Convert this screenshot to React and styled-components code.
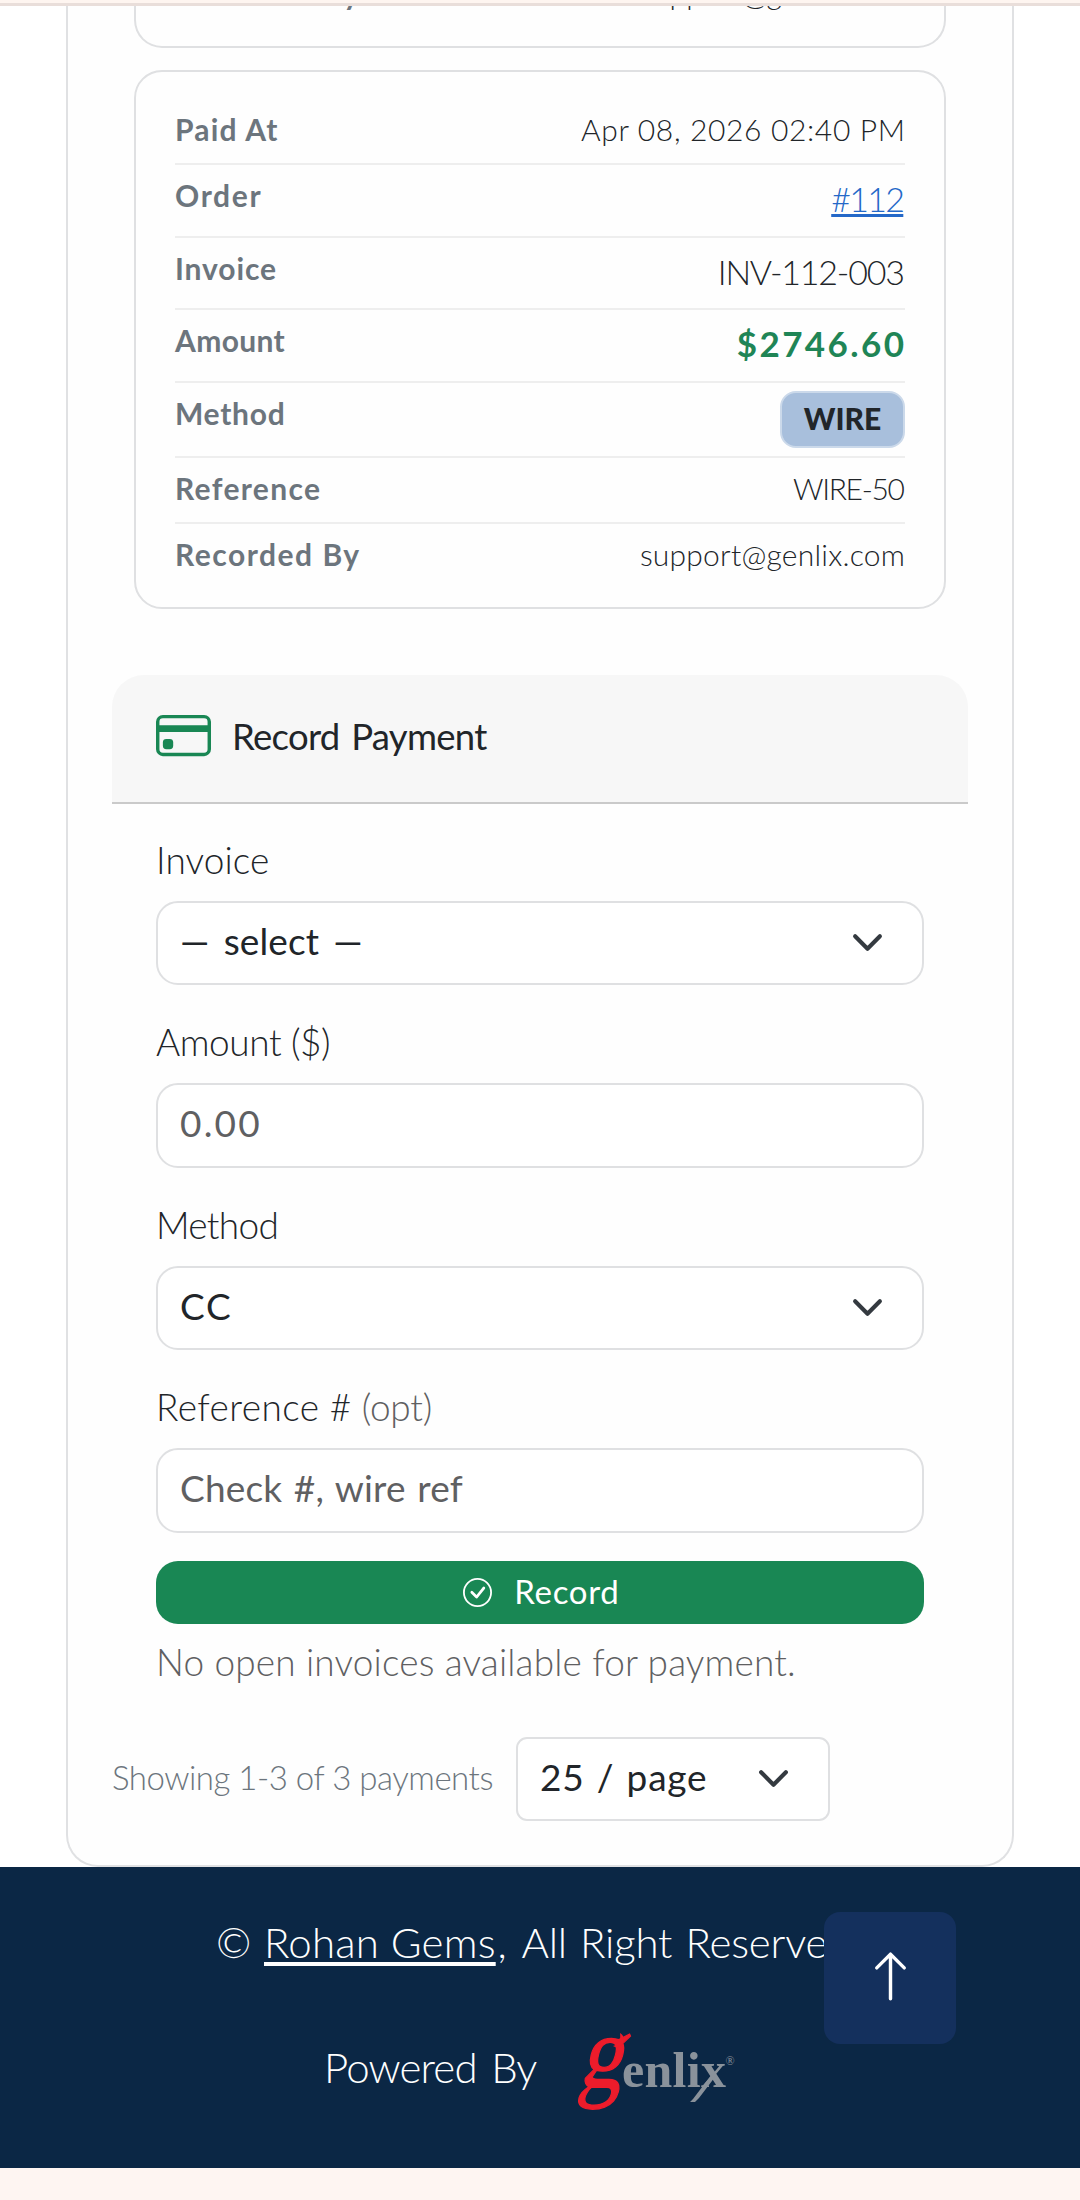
import React from 'react';
import styled, { createGlobalStyle } from 'styled-components';
import { BsArrowUp, BsCheckCircle, BsCreditCard } from 'react-icons/bs';

const GlobalStyle = createGlobalStyle`
  * {
    box-sizing: border-box;
  }
  body {
    margin: 0;
    background: #fef5f2;
    color: #212529;
    font-family: Lato, sans-serif;
    font-weight: 300;
    overflow: hidden;
  }
`;

const Page = styled.div`
  position: relative;
  width: 1080px;
  height: 2200px;
  overflow: hidden;
`;
const TopBar = styled.div`
  height: 6px;
  background: #fef5f0;
  border-bottom: 3px solid #e9deda;
`;
const Main = styled.main`
  height: 1861px;
  padding: 0 66px;
  background: #fff;
`;
const Panel = styled.section`
  height: 1861px;
  padding: 0 44px 44px;
  border: 2px solid #e0e1e3;
  border-top: none;
  border-radius: 0 0 32px 32px;
  background: #fefefe;
`;

/* Tracked text, the trailing gap is pulled back so that edges line up */
const Text = styled.span`
  letter-spacing: ${(p) => p.$ls || 0}px;
  margin-right: ${(p) => -(p.$ls || 0)}px;
  word-spacing: ${(p) => p.$ws || 0}px;
  white-space: pre;
`;

const List = styled.div`
  display: flex;
  flex-direction: column;
  gap: 22px;
  margin: 0 22px;
`;
const Card = styled.div`
  padding: 27px 39px 19px;
  border: 2px solid #dfe0e2;
  border-radius: 28px;
`;
const CutCard = styled(Card)`
  display: flex;
  flex-direction: column;
  justify-content: flex-end;
  height: 42px;
  padding-top: 0;
  overflow: hidden;
  border-top: none;
  border-radius: 0 0 28px 28px;
`;
const Row = styled.div`
  display: flex;
  justify-content: space-between;
  align-items: flex-start;
  padding: 10px 0 13px;
  border-bottom: 2px solid #eeeeee;

  &:last-child {
    border-bottom: none;
  }
`;
const Label = styled(Text)`
  color: #6c757d;
  font-size: 30px;
  font-weight: 700;
  line-height: 41px;
`;
const Value = styled(Text)`
  font-size: ${(p) => (p.$big ? 34 : 30)}px;
  line-height: ${(p) => (p.$big ? 47.6 : 41)}px;
`;
const OrderLink = styled(Value)`
  color: #2468c8;
  text-decoration: underline;
  text-decoration-thickness: 3px;
  text-underline-offset: 2px;
  text-decoration-skip-ink: none;
`;
const Amount = styled(Value)`
  padding-right: 1px;
  color: #1f8556;
  font-size: 35px;
  font-weight: 700;
`;
const Badge = styled.span`
  width: 125px;
  height: 57px;
  margin: -2px 0 -5px;
  border: 2px solid #cbd9ea;
  border-radius: 16px;
  background: #a8bfdc;
  font-size: 30px;
  font-weight: 900;
  line-height: 50px;
  text-align: center;
`;

const RecordCard = styled.div`
  margin-top: 66px;
`;
const RecordHead = styled.div`
  display: flex;
  align-items: center;
  gap: 21px;
  height: 129px;
  padding: 0 44px 5px;
  border-bottom: 2px solid #cacaca;
  border-radius: 32px 32px 0 0;
  background: #f7f7f7;
  font-size: 36.5px;
  font-weight: 400;

  svg {
    color: #198754;
  }
`;
const Form = styled.div`
  display: flex;
  flex-direction: column;
  padding: 31px 44px 0;
`;
const Field = styled.div`
  margin-bottom: 32px;
`;
const FieldLabel = styled.div`
  margin-bottom: 17px;
  font-size: 37px;
  line-height: 49px;
`;
const Muted = styled(Text)`
  color: #5f6062;
`;
const SelectBox = styled.div`
  display: flex;
  align-items: center;
  width: ${(p) => p.$width || '100%'};
  height: 84px;
  padding-right: 38px;
  border: 2px solid #dfe0e2;
  border-radius: ${(p) => p.$radius || 22}px;
  background: #fff;
`;
const Select = styled.select`
  flex: 1;
  min-width: 0;
  height: 80px;
  padding: 0 0 5px 22px;
  border: none;
  outline: none;
  appearance: none;
  background: transparent;
  color: #212529;
  font: 400 37px Lato, sans-serif;
  letter-spacing: ${(p) => p.$ls}px;
  word-spacing: ${(p) => p.$ws || 0}px;
`;
const Input = styled.input`
  display: block;
  width: 100%;
  height: 85px;
  padding: 0 22px 5px;
  border: 2px solid #dfe0e2;
  border-radius: 22px;
  background: #fff;
  font: 400 37px Lato, sans-serif;
  letter-spacing: ${(p) => p.$ls}px;
  word-spacing: ${(p) => p.$ws || 0}px;

  &::placeholder {
    color: #5f6062;
    opacity: 1;
  }
`;
const RecordButton = styled.button`
  display: flex;
  align-items: center;
  justify-content: center;
  gap: 22px;
  height: 63px;
  margin-top: -4px;
  padding: 0 0 0 2px;
  border: none;
  border-radius: 22px;
  background: #198754;
  color: #fff;
  font: 400 33px Lato, sans-serif;

  span {
    padding-bottom: 3px;
  }
`;
const Note = styled.p`
  margin: 14px 0 0;
  color: #5f6062;
  font-size: 37px;
  line-height: 48px;
`;
const Pager = styled.div`
  display: flex;
  align-items: center;
  margin-top: 51px;
`;
const Showing = styled.div`
  width: 404px;
  padding-bottom: 4px;
  color: #6c757d;
  font-size: 33px;
`;

const Footer = styled.footer`
  height: 301px;
  padding-top: 45px;
  background: #0b2745;
  color: #fff;
  font-size: 42px;
`;
const Copyright = styled.div`
  display: flex;
  padding-left: 216px;
  line-height: 60px;
`;
const Mark = styled.span`
  width: 48px;
`;
const SiteLink = styled(Text)`
  color: inherit;
  text-decoration: underline;
  text-decoration-thickness: 4px;
  text-underline-offset: 4px;
  text-decoration-skip-ink: none;
`;
const Comma = styled.span`
  width: 26px;
  padding-left: 2px;
`;
const Powered = styled.div`
  display: flex;
  align-items: center;
  height: 80px;
  margin-top: 60px;
  padding-left: 324px;
`;
const PoweredText = styled.div`
  width: 248px;
  padding-bottom: 11px;
`;
const Logo = styled.svg`
  overflow: visible;
`;
const TopButton = styled.button`
  position: absolute;
  top: 1912px;
  left: 824px;
  display: flex;
  align-items: center;
  justify-content: center;
  width: 132px;
  height: 132px;
  padding: 0 0 4px;
  border: none;
  border-radius: 16px;
  background: #14305d;
  color: #fff;
`;

const Chevron = () => (
  <svg width="33" height="33" viewBox="0 0 16 16" fill="none" stroke="#343a40" strokeWidth="2" strokeLinecap="round" strokeLinejoin="round">
    <path d="m2 5 6 6 6-6" />
  </svg>
);

const GenlixLogo = () => (
  <Logo width="168" height="82" viewBox="0 0 168 82" fontFamily="'Liberation Serif', serif">
    <text transform="translate(6 56) skewX(-14) scale(0.84 1)" fontSize="103" fill="#ed1c2b" stroke="#ed1c2b" strokeWidth="1.4">g</text>
    <path d="M41 15c6-2 8-6 7-13 6 3 5 12-3 15z" fill="#ed1c2b" />
    <text x="50" y="56" fontSize="50" fontWeight="700" fill="#8a929b" textLength="104">enlix</text>
    <path d="M140 43l-19 25-3 3h5l4-4 16-21z" fill="#8a929b" />
    <text x="153.5" y="34" fontSize="12" fill="#8a929b">®</text>
  </Logo>
);

const payment = [
  { label: 'Paid At', ls: 1.2, value: <Value $ls={0.65}>Apr 08, 2026 02:40 PM</Value> },
  { label: 'Order', ls: 1.67, value: <OrderLink as="a" href="#112" $big $ls={-1.7}>#112</OrderLink> },
  { label: 'Invoice', ls: 0.9, value: <Value $big $ls={-1.2}>INV-112-003</Value> },
  { label: 'Amount', ls: 0.35, value: <Amount $big $ls={2.4}>$2746.60</Amount> },
  { label: 'Method', ls: 0.73, value: <Badge>WIRE</Badge> },
  { label: 'Reference', ls: 1.33, value: <Value $ls={-1.3}>WIRE-50</Value> },
  { label: 'Recorded By', ls: 1.5, value: <Value $ls={0.23}>support@genlix.com</Value> },
];

const PaymentRow = ({ item }) => (
  <Row>
    <Label $ls={item.ls}>{item.label}</Label>
    {item.value}
  </Row>
);

const App = () => {
  return (
    <Page>
      <GlobalStyle />
      <TopBar />
      <Main>
        <Panel>
          <List>
            <CutCard>
              <PaymentRow item={payment[6]} />
            </CutCard>
            <Card>
              {payment.map((item) => (
                <PaymentRow key={item.label} item={item} />
              ))}
            </Card>
          </List>

          <RecordCard>
            <RecordHead>
              <BsCreditCard size={55} />
              <Text $ls={-0.7} $ws={3}>Record Payment</Text>
            </RecordHead>
            <Form>
              <Field>
                <FieldLabel><Text $ls={0.1}>Invoice</Text></FieldLabel>
                <SelectBox>
                  <Select $ls={0.1} $ws={4.7}><option>— select —</option></Select>
                  <Chevron />
                </SelectBox>
              </Field>
              <Field>
                <FieldLabel><Text $ls={-0.4}>Amount ($)</Text></FieldLabel>
                <Input placeholder="0.00" $ls={2.2} />
              </Field>
              <Field>
                <FieldLabel><Text $ls={-0.7}>Method</Text></FieldLabel>
                <SelectBox>
                  <Select $ls={1.8}><option>CC</option></Select>
                  <Chevron />
                </SelectBox>
              </Field>
              <Field>
                <FieldLabel>
                  <Text $ls={0.4}>Reference # </Text>
                  <Muted $ls={-0.2}>(opt)</Muted>
                </FieldLabel>
                <Input placeholder="Check #, wire ref" $ls={0.16} $ws={2} />
              </Field>
              <RecordButton>
                <BsCheckCircle size={29} />
                <Text $ls={0.7}>Record</Text>
              </RecordButton>
              <Note><Text $ls={0.15}>No open invoices available for payment.</Text></Note>
            </Form>
          </RecordCard>

          <Pager>
            <Showing><Text $ls={-0.48}>Showing 1-3 of 3 payments</Text></Showing>
            <SelectBox $width="314px" $radius={11}>
              <Select $ls={0.8} $ws={2}><option>25 / page</option></Select>
              <Chevron />
            </SelectBox>
          </Pager>
        </Panel>
      </Main>

      <Footer>
        <Copyright>
          <Mark>©</Mark>
          <SiteLink as="a" href="#" $ls={0.2}>Rohan Gems</SiteLink>
          <Comma>,</Comma>
          <Text $ls={-0.2} $ws={2}>All Right Reserved.</Text>
        </Copyright>
        <Powered>
          <PoweredText><Text $ls={-0.85} $ws={4}>Powered By</Text></PoweredText>
          <GenlixLogo />
        </Powered>
      </Footer>
      <TopButton aria-label="Back to top"><BsArrowUp size={55} /></TopButton>
    </Page>
  );
};

export default App;
